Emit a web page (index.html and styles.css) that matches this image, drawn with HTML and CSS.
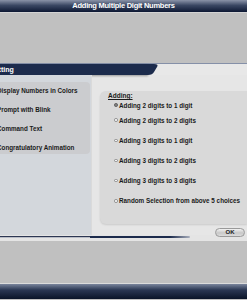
FILE: index.html
```html
<!DOCTYPE html>
<html lang="en">
<head>
  <meta charset="UTF-8" />
  <title>Adding Multiple Digit Numbers</title>
  <link rel="stylesheet" href="styles.css">
</head>
<body>
  <header class="titlebar">Adding Multiple Digit Numbers</header>

  <div class="gap"></div>

  <section class="panel">
    <div class="tabrow">
      <div class="tab">Setting</div>
      <svg class="tab-end" width="12" height="11" viewBox="0 0 12 11">
        <path d="M0 0 H6 Q11 0 9 3 L6 8 Q4.5 11 0 11 Z" fill="#1c2b4c"/>
      </svg>
    </div>

    <div class="panel-body">
      <aside class="sidebar">
        <ul class="options">
          <li>Display Numbers in Colors</li>
          <li>Prompt with Blink</li>
          <li>Command Text</li>
          <li>Congratulatory Animation</li>
        </ul>
      </aside>

      <main class="content">
        <div class="choices">
          <div class="choices-title">Adding:</div>
          <label class="choice"><span class="radio checked"></span>Adding 2 digits to 1 digit</label>
          <label class="choice"><span class="radio"></span>Adding 2 digits to 2 digits</label>
          <label class="choice"><span class="radio"></span>Adding 3 digits to 1 digit</label>
          <label class="choice"><span class="radio"></span>Adding 3 digits to 2 digits</label>
          <label class="choice"><span class="radio"></span>Adding 3 digits to 3 digits</label>
          <label class="choice"><span class="radio"></span>Random Selection from above 5 choices</label>
        </div>
      </main>
    </div>

    <div class="panel-foot">
      <div class="foot-left"></div>
      <div class="foot-mid"></div>
      <button class="ok">OK</button>
    </div>
  </section>

  <div class="gap bottom"></div>

  <footer class="footbar"></footer>
</body>
</html>
```

FILE: styles.css
```css
body {
  margin: 0;
  width: 247px;
  height: 300px;
  overflow: hidden;
  background-color: #c0c0c0;
  font-family: 'Liberation Sans', Arial, sans-serif;
  color: #1a1a1a;
  display: flex;
  flex-direction: column;
}

.titlebar {
  height: 12px;
  line-height: 12px;
  background: linear-gradient(#8a93a8, #3a4763 45%, #0d1833);
  color: white;
  font-size: 7.5px;
  font-weight: bold;
  letter-spacing: -0.25px;
  text-align: center;
}

.gap {
  height: 51px;
  border-top: 1px solid #d4d4d4;
  box-sizing: border-box;
}

.gap.bottom {
  height: 43px;
  border-top: none;
  border-bottom: 1px solid #dcdcdc;
}

.panel {
  position: relative;
  height: 178px;
  background-color: #e6e6e6;
  border-top: 1px solid #8590a8;
  box-sizing: border-box;
  display: flex;
  flex-direction: column;
}

.tabrow {
  display: flex;
  height: 11px;
  background-color: #e8e8e8;
}

.tab {
  width: 148px;
  height: 11px;
  line-height: 11px;
  background-color: #1c2b4c;
  color: white;
  font-size: 7px;
  font-weight: bold;
  text-indent: -10px;
  overflow: hidden;
  white-space: nowrap;
  box-shadow: 0 1px 2px rgba(0,0,0,0.35);
}

.tab-end {
  display: block;
}

.panel-body {
  flex: 1;
  display: flex;
}

.sidebar {
  width: 92px;
  background-color: #d3d7dc;
  border-right: 1px solid #dadada;
  padding-top: 7px;
  box-sizing: border-box;
}

.options {
  list-style: none;
  margin: 0 0 0 -3px;
  padding: 0;
  width: 93px;
  height: 72px;
  background-color: #cbcccf;
  border-radius: 4px;
}

.options li {
  height: 19px;
  line-height: 17px;
  font-size: 6.3px;
  font-weight: bold;
  white-space: nowrap;
}

.content {
  flex: 1;
  padding-top: 16px;
  padding-left: 8px;
}

.choices {
  height: 133px;
  background-color: #d9d9d9;
  border-radius: 6px 0 0 6px;
  box-shadow: 0 1px 2px rgba(0,0,0,0.12);
  padding-left: 8px;
  box-sizing: border-box;
}

.choices-title {
  font-size: 6.5px;
  font-weight: bold;
  text-decoration: underline;
  line-height: 9px;
}

.choice {
  display: flex;
  align-items: center;
  height: 20.2px;
  font-size: 6.3px;
  font-weight: bold;
  white-space: nowrap;
  margin-left: 6px;
}

.choice:first-of-type {
  height: 10px;
}

.radio {
  width: 3.5px;
  height: 3.5px;
  border: 0.6px solid #8a8a8a;
  border-radius: 50%;
  background: #f4f4f4;
  margin-right: 1.5px;
  box-sizing: border-box;
}

.radio.checked {
  background: radial-gradient(#222 40%, #ddd 60%);
  border-color: #555;
}

.panel-foot {
  height: 6px;
  display: flex;
  align-items: flex-start;
  background-color: #e4e4e4;
}

.foot-left {
  width: 90px;
  height: 1px;
  margin-top: 1px;
  background-color: #2c3652;
  box-shadow: 0 1px 0 #b8bcc6;
}

.foot-mid {
  width: 100px;
  height: 2px;
  margin-top: 1px;
  background: linear-gradient(90deg, #1c2b4c 80%, #a9afbd);
  border-radius: 0 2px 2px 0;
}

.ok {
  position: absolute;
  right: 2px;
  bottom: 4px;
  width: 30px;
  height: 9px;
  padding: 0;
  border: 1px solid #9a9a9a;
  border-radius: 5px;
  background: linear-gradient(#f2f2f2, #c8c8c8 55%, #dcdcdc);
  font-family: 'Liberation Sans', Arial, sans-serif;
  font-size: 6px;
  font-weight: bold;
  color: #222;
  line-height: 7px;
}

.footbar {
  height: 15px;
  background: linear-gradient(#7a859c, #2a3753 40%, #0a1428);
}
```
